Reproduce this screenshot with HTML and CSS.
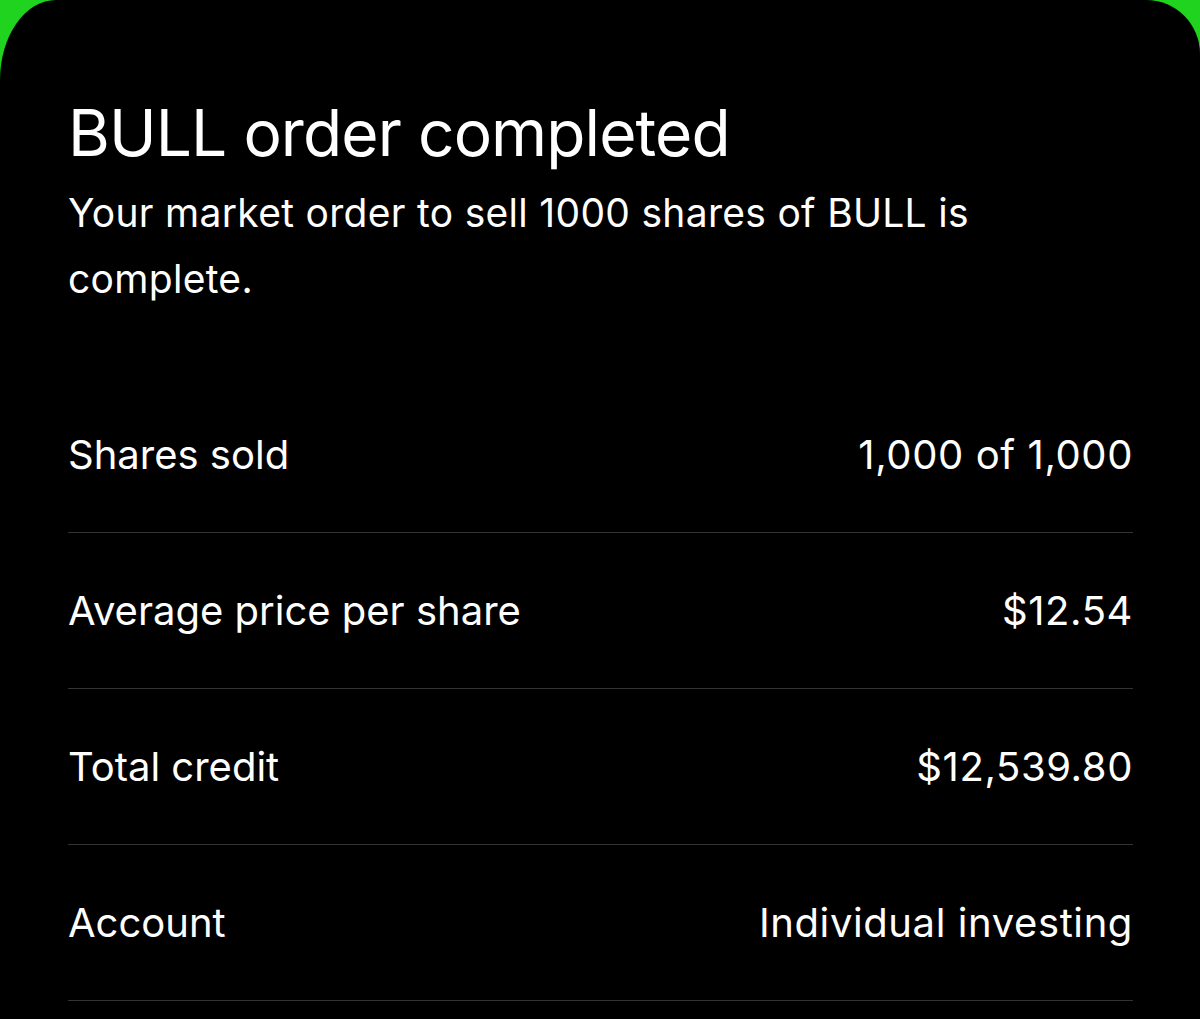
FILE: index.html
```html
<!DOCTYPE html>
<html>
<head>
<meta charset="utf-8">
<link rel="stylesheet" href="styles.css">
</head>
<body>
<div class="card">
  <h1 class="title">BULL order completed</h1>
  <p class="subtitle">Your market order to sell 1000 shares of BULL is complete.</p>
  <div class="rows">
    <div class="row"><span class="label">Shares sold</span><span class="value">1,000 of 1,000</span></div>
    <div class="row"><span class="label">Average price per share</span><span class="value">$12.54</span></div>
    <div class="row"><span class="label">Total credit</span><span class="value">$12,539.80</span></div>
    <div class="row"><span class="label">Account</span><span class="value">Individual investing</span></div>
  </div>
</div>
</body>
</html>
```
FILE: styles.css
```css
html, body {
  margin: 0;
  padding: 0;
  background: #20d31e;
  height: 1019px;
  overflow: hidden;
}
.card {
  background: #000;
  color: #fff;
  height: 1019px;
  box-sizing: border-box;
  border-top-left-radius: 56px 80px;
  border-top-right-radius: 54px 54px;
  padding: 93px 67px 0 68px;
  font-family: Inter, "Noto Sans", sans-serif;
}
.title {
  margin: 0;
  font-size: 64px;
  font-weight: 400;
  line-height: 80px;
  letter-spacing: -0.9px;
}
.subtitle {
  margin: 7px 0 0;
  font-size: 39px;
  font-weight: 400;
  line-height: 66px;
  letter-spacing: 0.3px;
  max-width: 960px;
}
.rows {
  margin-top: 65px;
}
.row {
  display: flex;
  justify-content: space-between;
  align-items: center;
  height: 155px;
  border-bottom: 1.5px solid #333;
  font-size: 40px;
}
.value {
  letter-spacing: 0.6px;
}
```
